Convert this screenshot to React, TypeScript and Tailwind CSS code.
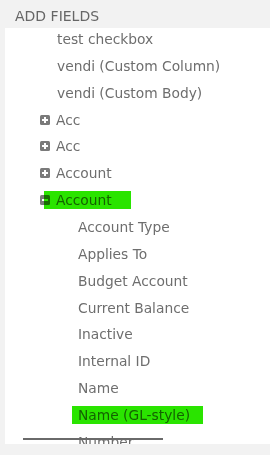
import { ReactNode } from "react";

type Row = {
  label: string;
  level: 2 | 3;
  icon?: "plus" | "minus";
  highlight?: string;
};

const rows: Row[] = [
  { label: "test checkbox", level: 2 },
  { label: "vendi (Custom Column)", level: 2 },
  { label: "vendi (Custom Body)", level: 2 },
  { label: "Acc", level: 2, icon: "plus" },
  { label: "Acc", level: 2, icon: "plus" },
  { label: "Account", level: 2, icon: "plus" },
  { label: "Account", level: 2, icon: "minus", highlight: "left-[39px] w-[87px]" },
  { label: "Account Type", level: 3 },
  { label: "Applies To", level: 3 },
  { label: "Budget Account", level: 3 },
  { label: "Current Balance", level: 3 },
  { label: "Inactive", level: 3 },
  { label: "Internal ID", level: 3 },
  { label: "Name", level: 3 },
  { label: "Name (GL-style)", level: 3, highlight: "left-[67px] w-[131px]" },
  { label: "Number", level: 3 },
];

const ToggleIcon = ({ kind }: { kind: "plus" | "minus" }) => (
  <svg width="10" height="10" viewBox="0 0 10 10" className="shrink-0">
    <rect x="0" y="0" width="10" height="10" rx="1.5" fill="#7a7a7a" />
    <rect x="2" y="4" width="6" height="2" fill="#fff" />
    {kind === "plus" && <rect x="4" y="2" width="2" height="6" fill="#fff" />}
  </svg>
);

const TreeRow = ({ row }: { row: Row }) => {
  let content: ReactNode;
  if (row.icon) {
    content = (
      <div className="flex items-center pl-[35px]">
        <ToggleIcon kind={row.icon} />
        <span className="ml-[6px]">{row.label}</span>
      </div>
    );
  } else {
    content = (
      <span className={row.level === 3 ? "pl-[73px]" : "pl-[52px]"}>{row.label}</span>
    );
  }
  return (
    <div className="relative h-[26.86px] pt-[3px] leading-[16px] whitespace-nowrap">
      {content}
      {row.highlight && (
        <div
          className={`absolute top-[2px] h-[18px] bg-[#2ae400] mix-blend-multiply ${row.highlight}`}
        />
      )}
    </div>
  );
};

export default function App() {
  return (
    <div
      className="h-[455px] w-[270px] overflow-hidden bg-[#f2f2f2]"
      style={{ fontFamily: '"DejaVu Sans", "Liberation Sans", sans-serif' }}
    >
      <div className="flex h-[28px] items-center pl-[15px] pt-[4px] text-[14px] text-[#666] uppercase">
        Add Fields
      </div>
      <div className="relative ml-[5px] h-[416px] overflow-hidden bg-white text-[13.8px] text-[#6e6e6e]">
        {rows.map((row, i) => (
          <TreeRow key={i} row={row} />
        ))}
        <div className="absolute left-[18px] top-[410px] h-[2px] w-[140px] bg-[#6a6a6a]" />
      </div>
    </div>
  );
}
